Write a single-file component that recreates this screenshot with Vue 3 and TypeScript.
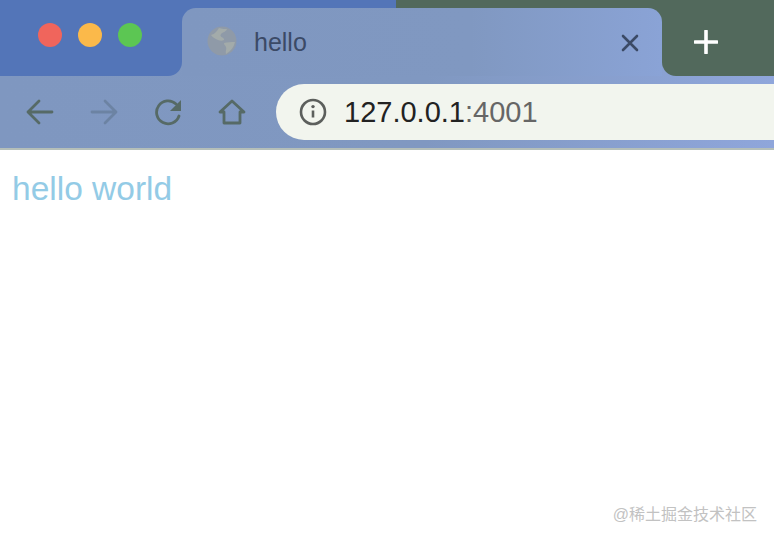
<template>
  <div class="page">
    <header class="chrome">
      <div class="strip">
        <div class="cap-left">
          <span class="light red"></span>
          <span class="light amber"></span>
          <span class="light green"></span>
        </div>
        <div class="tab-slot">
          <div class="tab">
            <svg class="globe" width="30" height="30" viewBox="0 0 30 30">
              <circle cx="15" cy="15" r="14.5" fill="#8f9aa8" />
              <path d="M4 9c4-1 6-4 8-7 3 1 6 1 8 1-1 3-4 3-6 5-2 3 2 3 3 5s-4 2-6 1-5-2-7-5zM17 17c3-1 7-1 11-1-1 5-4 9-9 12-1-3 1-5 0-7s-2-2-2-4z" fill="#a3abaa" />
            </svg>
            <span class="title">hello</span>
            <svg class="close" width="18" height="18" viewBox="0 0 18 18">
              <path d="M2 2l14 14M16 2L2 16" stroke="#3b4a66" stroke-width="2.6" stroke-linecap="round" />
            </svg>
          </div>
        </div>
        <div class="cap-right">
          <svg width="24" height="24" viewBox="0 0 24 24">
            <path d="M12 1v22M1 12h22" stroke="#fff" stroke-width="3.6" stroke-linecap="round" />
          </svg>
        </div>
      </div>
      <div class="toolbar">
        <div class="nav">
          <svg width="28" height="26" viewBox="0 0 28 26">
            <path d="M26 13H2M13 2L2 13l11 11" fill="none" stroke="#566a66" stroke-width="2.8" stroke-linecap="round" stroke-linejoin="round" />
          </svg>
          <svg width="28" height="26" viewBox="0 0 28 26">
            <path d="M2 13h24M15 2l11 11-11 11" fill="none" stroke="#6c83a3" stroke-width="2.8" stroke-linecap="round" stroke-linejoin="round" />
          </svg>
          <svg width="28" height="28" viewBox="0 0 28 28">
            <path d="M25 18a11.5 11.5 0 1 1-3-12" fill="none" stroke="#566a66" stroke-width="2.8" stroke-linecap="round" />
            <path d="M27 2v11H16z" fill="#566a66" />
          </svg>
          <svg width="28" height="26" viewBox="0 0 28 26">
            <path d="M2 13L14 2l12 11h-4v11H6V13z" fill="none" stroke="#566a66" stroke-width="2.8" stroke-linejoin="round" />
          </svg>
        </div>
        <div class="address">
          <svg width="28" height="28" viewBox="0 0 28 28">
            <circle cx="14" cy="14" r="12" fill="none" stroke="#5c5f5c" stroke-width="2.6" />
            <path d="M14 12.5v7" stroke="#5c5f5c" stroke-width="2.6" />
            <circle cx="14" cy="8.6" r="1.7" fill="#5c5f5c" />
          </svg>
          <span class="url">127.0.0.1<span class="port">:4001</span></span>
        </div>
      </div>
    </header>
    <main class="content">hello world</main>
    <span class="watermark">@稀土掘金技术社区</span>
  </div>
</template>

<script setup lang="ts">
</script>

<style scoped>
.page {
  position: relative;
  height: 540px;
  overflow: hidden;
  background: #fff;
  font-family: "Liberation Sans", "Noto Sans CJK SC", sans-serif;
}

.chrome {
  background: linear-gradient(90deg, #7f97c0 0%, #8098c1 55%, #8fa6db 100%);
  border-bottom: 2px solid #b5bfb9;
}

.strip {
  display: flex;
  height: 76px;
}

.cap-left {
  width: 182px;
  padding: 23px 0 0 38px;
  box-sizing: border-box;
  display: flex;
  align-items: flex-start;
  gap: 16px;
  background: #5375b8;
  border-bottom-right-radius: 14px;
}

.light {
  width: 24px;
  height: 24px;
  border-radius: 50%;
}

.red { background: #f0655c; }
.amber { background: #fbb94a; }
.green { background: #5cc653; }

.tab-slot {
  width: 480px;
  background: linear-gradient(90deg, #5375b8 214px, #52695c 214px);
}

.tab {
  height: 68px;
  margin-top: 8px;
  padding: 0 23px 0 25px;
  box-sizing: border-box;
  display: flex;
  align-items: center;
  border-radius: 14px 14px 0 0;
  background: linear-gradient(90deg, #7f97c0 0%, #8098c1 60%, #8aa3d6 100%);
}

.globe {
  margin-top: -2px;
}

.title {
  margin-left: 17px;
  font-size: 25px;
  color: #3b4a66;
  flex: 1;
}

.close {
  margin-top: 1px;
}

.cap-right {
  flex: 1;
  display: flex;
  align-items: center;
  padding: 8px 0 0 32px;
  box-sizing: border-box;
  background: #52695c;
  border-bottom-left-radius: 14px;
}

.toolbar {
  height: 72px;
  display: flex;
  align-items: flex-start;
}

.nav {
  width: 276px;
  padding: 22px 0 0 26px;
  box-sizing: border-box;
  display: flex;
  align-items: center;
  gap: 36px;
}

.address {
  flex: 1;
  height: 56px;
  margin-top: 8px;
  padding-left: 23px;
  display: flex;
  align-items: center;
  gap: 17px;
  border-radius: 28px 0 0 28px;
  background: #f2f5ee;
}

.url {
  font-size: 29px;
  color: #222;
}

.port {
  color: #666;
}

.content {
  padding: 20px 12px;
  font-size: 33.5px;
  line-height: 38px;
  color: #93cbe6;
}

.watermark {
  position: absolute;
  right: 17px;
  bottom: 15px;
  font-size: 16px;
  color: #c2c2c2;
}
</style>
